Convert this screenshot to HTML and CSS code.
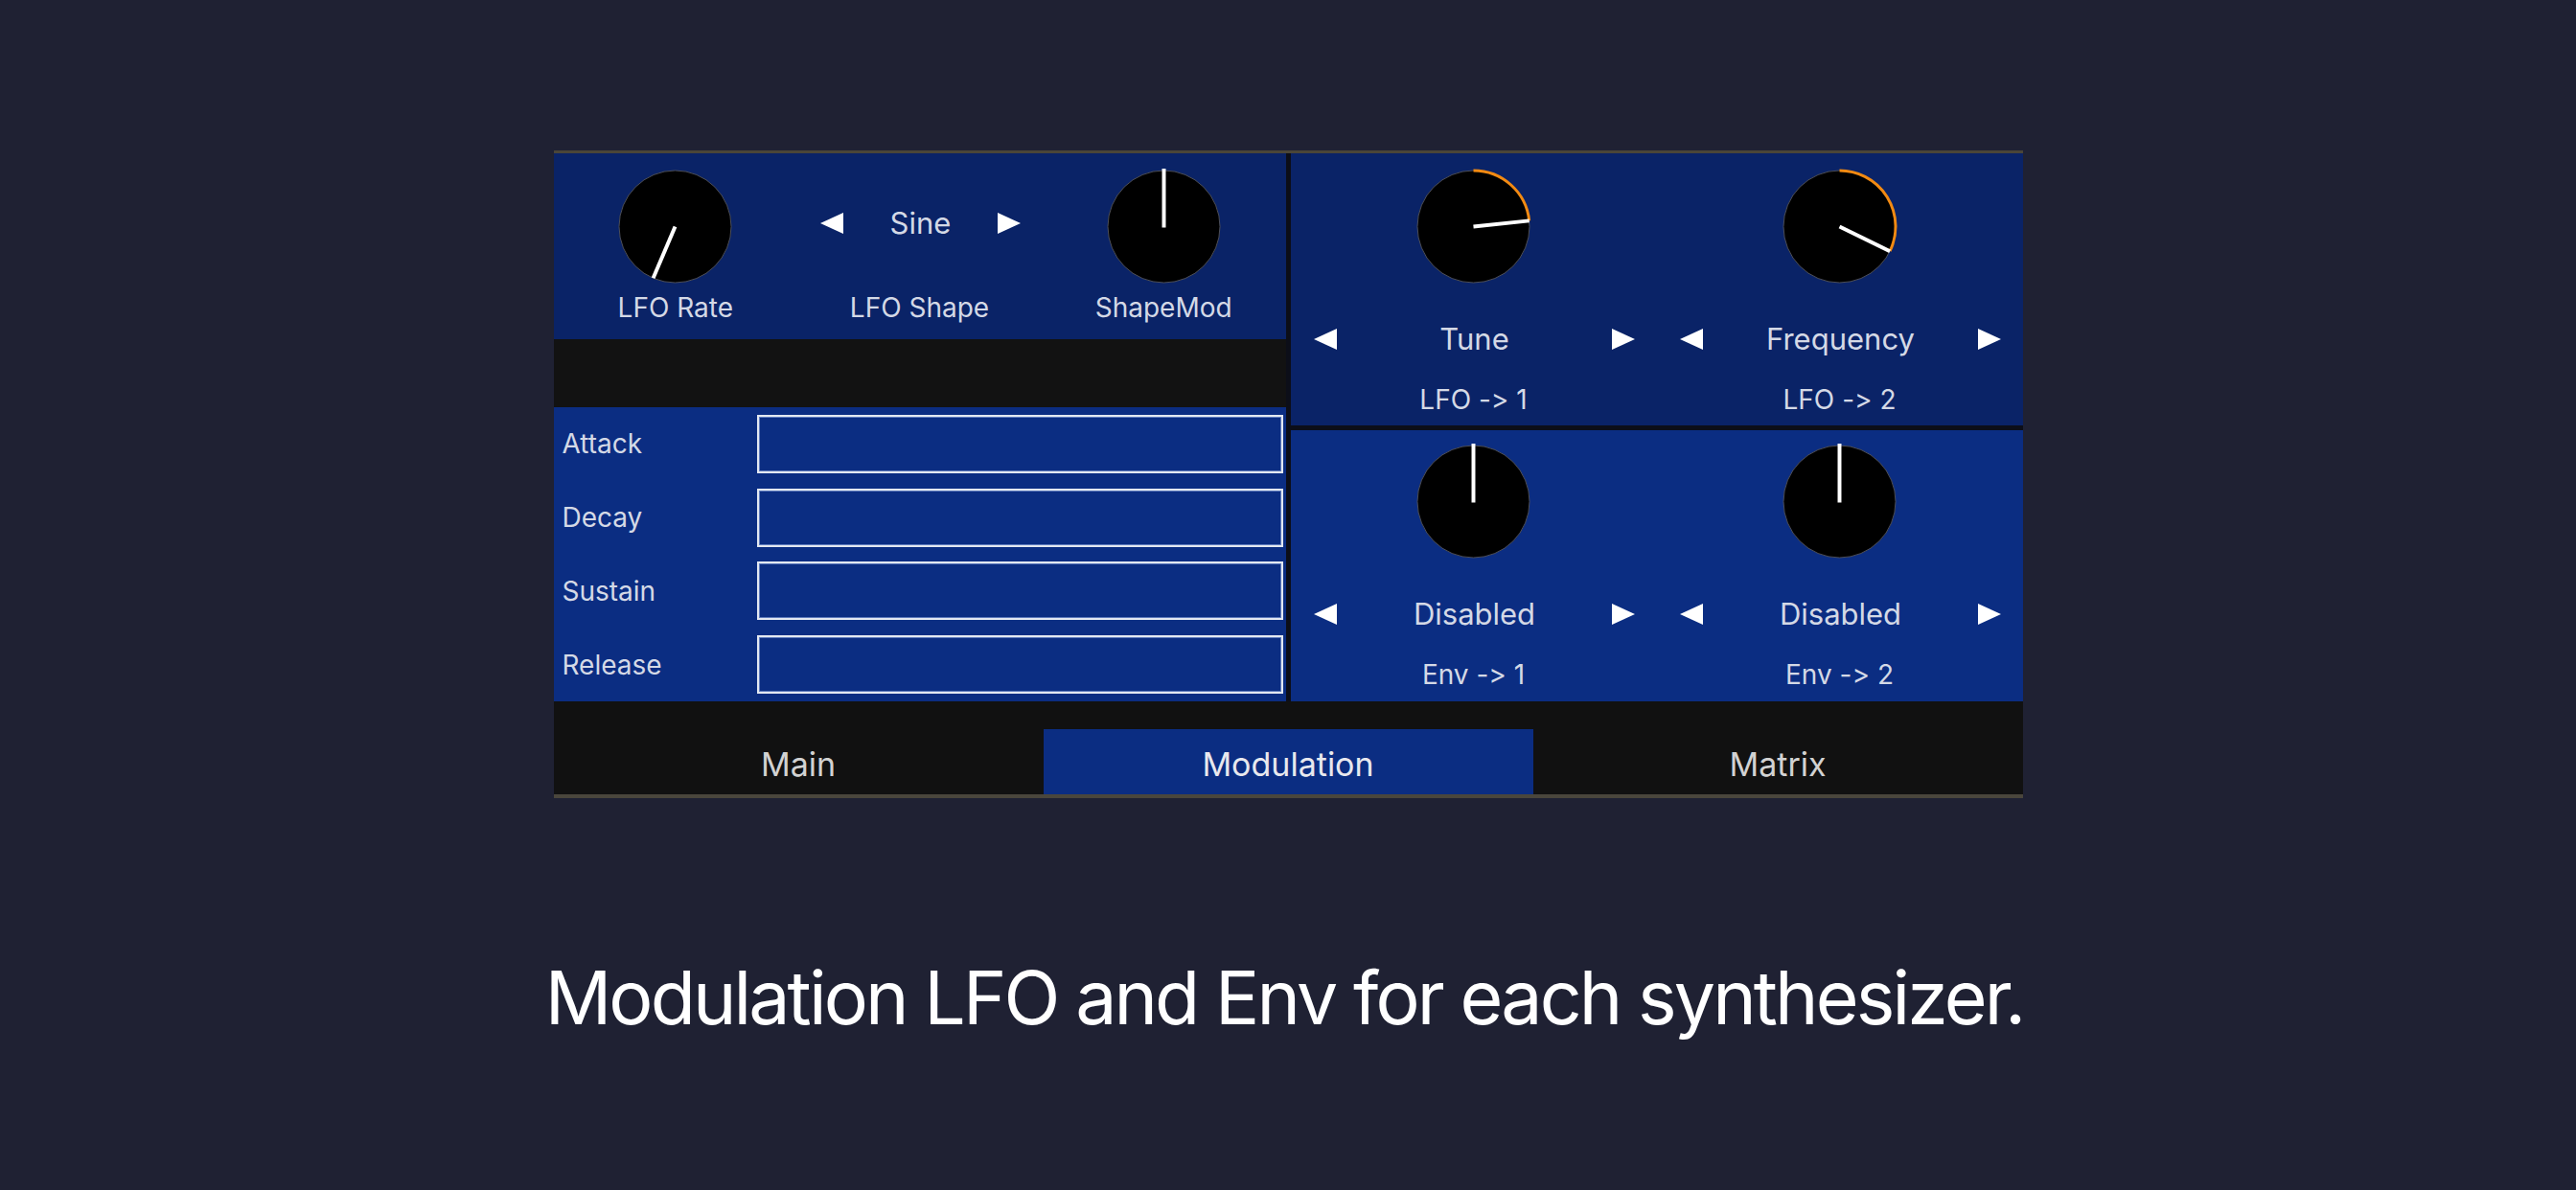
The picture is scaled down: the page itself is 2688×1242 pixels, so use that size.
FILE: index.html
```html
<!DOCTYPE html>
<html lang="en">
<head>
<meta charset="utf-8">
<title>Modulation</title>
<link rel="stylesheet" href="styles.css">
</head>
<body>
<div class="app">
  <div class="main">
    <div class="col-left">
      <section class="panel panel-dark lfo">
        <div class="ctrl">
          <div class="slot">
            <svg class="knob" viewBox="0 0 120 120"><circle cx="60" cy="60" r="59" class="knob-body"/><line x1="60" y1="60" x2="36.9" y2="114.3" class="knob-ptr"/></svg>
          </div>
          <div class="label">LFO Rate</div>
        </div>
        <div class="ctrl">
          <div class="slot">
            <div class="selector lift">
              <svg class="tri" viewBox="0 0 23 21"><polygon points="23,0 23,21 0,10.5"/></svg>
              <span class="value">Sine</span>
              <svg class="tri" viewBox="0 0 23 21"><polygon points="0,0 0,21 23,10.5"/></svg>
            </div>
          </div>
          <div class="label">LFO Shape</div>
        </div>
        <div class="ctrl">
          <div class="slot">
            <svg class="knob" viewBox="0 0 120 120"><circle cx="60" cy="60" r="59" class="knob-body"/><line x1="60" y1="61" x2="60" y2="-1" class="knob-ptr"/></svg>
          </div>
          <div class="label">ShapeMod</div>
        </div>
      </section>
      <div class="spacer"></div>
      <section class="panel panel-bright adsr">
        <div class="row"><span class="adsr-label">Attack</span><div class="field"></div></div>
        <div class="row"><span class="adsr-label">Decay</span><div class="field"></div></div>
        <div class="row"><span class="adsr-label">Sustain</span><div class="field"></div></div>
        <div class="row"><span class="adsr-label">Release</span><div class="field"></div></div>
      </section>
    </div>
    <div class="col-right">
      <section class="panel panel-dark mod">
        <div class="ctrl">
          <div class="slot">
            <svg class="knob" viewBox="0 0 120 120"><circle cx="60" cy="60" r="59" class="knob-body"/><path d="M60 1 A59 59 0 0 1 118.7 53.8" class="knob-arc"/><line x1="60" y1="60" x2="118.7" y2="53.8" class="knob-ptr"/></svg>
          </div>
          <div class="selector row-sel">
            <svg class="tri" viewBox="0 0 23 21"><polygon points="23,0 23,21 0,10.5"/></svg>
            <span class="value">Tune</span>
            <svg class="tri" viewBox="0 0 23 21"><polygon points="0,0 0,21 23,10.5"/></svg>
          </div>
          <div class="label sub">LFO -&gt; 1</div>
        </div>
        <div class="ctrl">
          <div class="slot">
            <svg class="knob" viewBox="0 0 120 120"><circle cx="60" cy="60" r="59" class="knob-body"/><path d="M60 1 A59 59 0 0 1 113 85.9" class="knob-arc"/><line x1="60" y1="60" x2="113" y2="85.9" class="knob-ptr"/></svg>
          </div>
          <div class="selector row-sel">
            <svg class="tri" viewBox="0 0 23 21"><polygon points="23,0 23,21 0,10.5"/></svg>
            <span class="value">Frequency</span>
            <svg class="tri" viewBox="0 0 23 21"><polygon points="0,0 0,21 23,10.5"/></svg>
          </div>
          <div class="label sub">LFO -&gt; 2</div>
        </div>
      </section>
      <section class="panel panel-bright mod env">
        <div class="ctrl">
          <div class="slot">
            <svg class="knob" viewBox="0 0 120 120"><circle cx="60" cy="60" r="59" class="knob-body"/><line x1="60" y1="61" x2="60" y2="-1" class="knob-ptr"/></svg>
          </div>
          <div class="selector row-sel">
            <svg class="tri" viewBox="0 0 23 21"><polygon points="23,0 23,21 0,10.5"/></svg>
            <span class="value">Disabled</span>
            <svg class="tri" viewBox="0 0 23 21"><polygon points="0,0 0,21 23,10.5"/></svg>
          </div>
          <div class="label sub">Env -&gt; 1</div>
        </div>
        <div class="ctrl">
          <div class="slot">
            <svg class="knob" viewBox="0 0 120 120"><circle cx="60" cy="60" r="59" class="knob-body"/><line x1="60" y1="61" x2="60" y2="-1" class="knob-ptr"/></svg>
          </div>
          <div class="selector row-sel">
            <svg class="tri" viewBox="0 0 23 21"><polygon points="23,0 23,21 0,10.5"/></svg>
            <span class="value">Disabled</span>
            <svg class="tri" viewBox="0 0 23 21"><polygon points="0,0 0,21 23,10.5"/></svg>
          </div>
          <div class="label sub">Env -&gt; 2</div>
        </div>
      </section>
    </div>
  </div>
  <nav class="tabs">
    <div class="tab">Main</div>
    <div class="tab active">Modulation</div>
    <div class="tab">Matrix</div>
  </nav>
</div>
<p class="caption">Modulation LFO and Env for each synthesizer.</p>
</body>
</html>
```
FILE: styles.css
```css
* { box-sizing: border-box; }

body {
  margin: 0;
  background: #1f2133;
  font-family: Inter, "Noto Sans", sans-serif;
  font-variant-ligatures: no-contextual;
  font-feature-settings: "calt" 0;
  color: #d4d9e6;
}

.app {
  width: 1533px;
  margin: 157px auto 0;
  border-top: 3px solid #4a4538;
  border-bottom: 4px solid #4a463c;
}

.main {
  display: grid;
  grid-template-columns: 764px 764px;
  column-gap: 5px;
  height: 572px;
  background: #0c0e18;
}

.col-left, .col-right {
  display: flex;
  flex-direction: column;
}

.col-right { gap: 5px; }

.panel-dark { background: #0a2367; }
.panel-bright { background: #0b2d82; }

.lfo {
  height: 194px;
  display: grid;
  grid-template-columns: repeat(3, 1fr);
  padding-top: 17px;
}

.spacer {
  height: 71px;
  background: #121212;
}

.ctrl {
  display: flex;
  flex-direction: column;
  align-items: center;
}

.slot {
  height: 119px;
  width: 100%;
  display: flex;
  align-items: center;
  justify-content: center;
}

.knob {
  width: 119px;
  height: 119px;
  overflow: visible;
  display: block;
}

.knob-body {
  fill: #000;
  stroke: #4d4f58;
  stroke-width: 1;
}

.knob-ptr {
  stroke: #ffffff;
  stroke-width: 4;
}

.knob-arc {
  fill: none;
  stroke: #f28a12;
  stroke-width: 3;
}

.label {
  margin-top: 8px;
  font-size: 28px;
  line-height: 34px;
  color: #d4d9e6;
  white-space: nowrap;
}

.selector {
  width: 100%;
  display: flex;
  align-items: center;
  justify-content: space-between;
  padding: 0 22px 0 24px;
  height: 46px;
}

.selector.lift { margin-bottom: 7px; }

.tri {
  width: 24px;
  height: 22px;
  fill: #ffffff;
  display: block;
}

.value {
  font-size: 31px;
  line-height: 46px;
  color: #d4d9e6;
  white-space: nowrap;
}

.mod {
  height: 284px;
  display: grid;
  grid-template-columns: 1fr 1fr;
  padding-top: 17px;
}

.mod.env {
  height: 283px;
  padding-top: 15px;
}

.row-sel { margin-top: 35px; }

.label.sub { margin-top: 23px; }

.adsr {
  height: 307px;
  display: flex;
  flex-direction: column;
}

.row {
  height: 77px;
  display: grid;
  grid-template-columns: 212px 1fr;
  align-items: center;
  padding-right: 3px;
}

.adsr-label {
  padding-left: 9px;
  font-size: 28px;
  line-height: 34px;
  color: #d4d9e6;
}

.field {
  height: 61px;
  border: 2px solid #e3e8f1;
  box-shadow: inset 0 0 0 1px #5f7bbd;
}

.tabs {
  height: 97px;
  background: #111111;
  display: grid;
  grid-template-columns: repeat(3, 1fr);
  align-items: end;
}

.tab {
  height: 68px;
  padding-top: 4px;
  display: flex;
  align-items: center;
  justify-content: center;
  font-size: 34px;
  color: #d2d2d2;
}

.tab.active {
  background: #0b2d82;
  color: #e8e8ee;
}

.caption {
  margin: 158px 0 0;
  padding-right: 8px;
  text-align: center;
  font-size: 77px;
  line-height: 100px;
  letter-spacing: -2.9px;
  color: #ffffff;
}
```
